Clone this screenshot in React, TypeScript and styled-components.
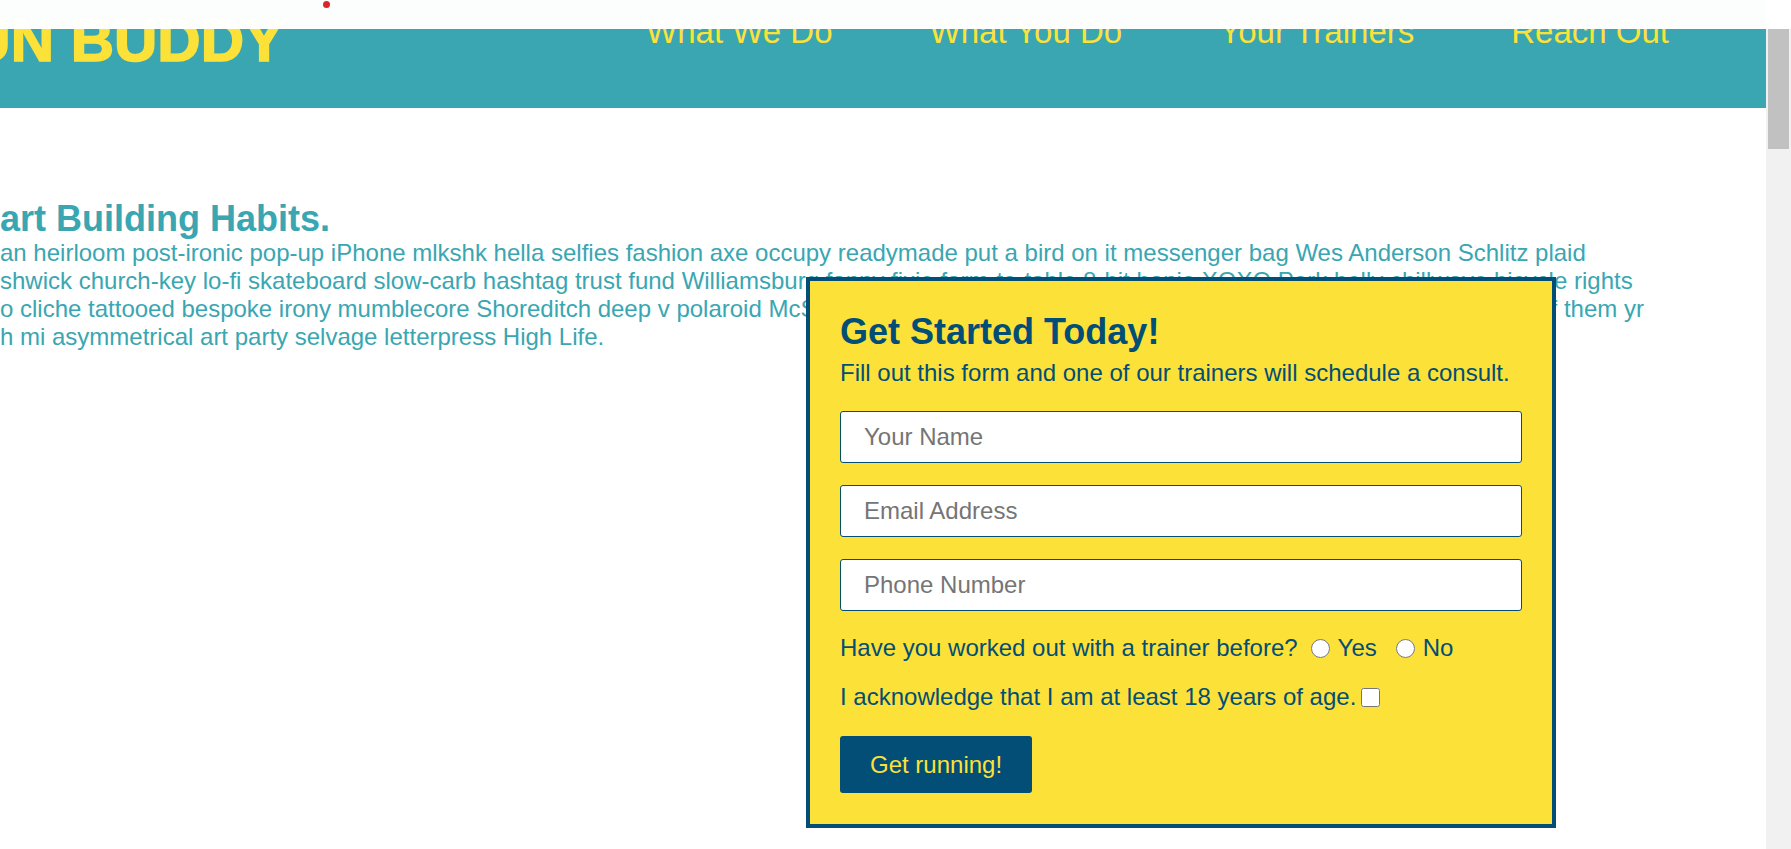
import React from "react";
import styled, { createGlobalStyle } from "styled-components";

const TEAL = "#39a6b2";
const YELLOW = "#fce138";
const NAVY = "#024e76";

const GlobalStyle = createGlobalStyle`
  * { box-sizing: border-box; }
  html, body {
    margin: 0;
    padding: 0;
    height: 100%;
    overflow: hidden;
    background: #fff;
  }
  body {
    font-family: "Liberation Sans", Arial, sans-serif;
  }
`;

const NAV_LINKS = ["What We Do", "What You Do", "Your Trainers", "Reach Out"];

const Page = () => {
  return (
    <>
      <GlobalStyle />
      <TopStrip>
        <Dot />
      </TopStrip>
      <Window>
        <Main>
          <Header>
            <Logo>Run Buddy</Logo>
            <Nav>
              {NAV_LINKS.map((item) => (
                <li key={item}>
                  <NavLink href="#">{item}</NavLink>
                </li>
              ))}
            </Nav>
          </Header>

          <Hero>
            <Intro>
              <IntroTitle>art Building Habits.</IntroTitle>
              <IntroText>
                an heirloom post-ironic pop-up iPhone mlkshk hella selfies fashion axe occupy readymade put a bird on it messenger bag Wes Anderson Schlitz plaid
                <br />
                shwick church-key lo-fi skateboard slow-carb hashtag trust fund Williamsburg fanny fixie farm-to-table 8-bit banjo XOXO Pork belly chillwave bicycle rights
                <br />
                o cliche tattooed bespoke irony mumblecore Shoreditch deep v polaroid McSweeney's craft beer vinyl semiotics 90's you probably haven't heard of them yr
                <br />
                h mi asymmetrical art party selvage letterpress High Life.
              </IntroText>
            </Intro>

            <Form onSubmit={(e) => e.preventDefault()}>
              <FormTitle>Get Started Today!</FormTitle>
              <FormLead>
                Fill out this form and one of our trainers will schedule a consult.
              </FormLead>
              <Fields>
                <Field type="text" placeholder="Your Name" />
                <Field type="email" placeholder="Email Address" />
                <Field type="tel" placeholder="Phone Number" />
              </Fields>
              <Question>
                Have you worked out with a trainer before?
                <Choice $offset={13}>
                  <Radio type="radio" name="trainer" />
                  Yes
                </Choice>
                <Choice $offset={19}>
                  <Radio type="radio" name="trainer" />
                  No
                </Choice>
              </Question>
              <Agree>
                I acknowledge that I am at least 18 years of age.
                <Check type="checkbox" />
              </Agree>
              <Submit type="submit">Get running!</Submit>
            </Form>
          </Hero>
        </Main>
        <Rail>
          <Thumb />
        </Rail>
      </Window>
    </>
  );
};

const TopStrip = styled.div`
  position: fixed;
  top: 0;
  left: 0;
  right: 0;
  height: 29px;
  background: rgba(255, 255, 255, 0.99);
  padding: 1px 0 0 323px;
  z-index: 10;
`;

const Dot = styled.span`
  display: block;
  width: 7px;
  height: 7px;
  border-radius: 50%;
  background: #dc2626;
`;

const Window = styled.div`
  display: flex;
  height: 100vh;
  overflow: hidden;
`;

const Main = styled.main`
  flex: 1;
  min-width: 0;
  overflow: hidden;
`;

const Header = styled.header`
  height: 108px;
  background: ${TEAL};
  display: flex;
  justify-content: space-between;
  align-items: flex-start;
  padding-top: 11px;
`;

const Logo = styled.h1`
  margin: 0 0 0 -76px;
  font-size: 60px;
  line-height: 60px;
  font-weight: 700;
  text-transform: uppercase;
  color: ${YELLOW};
  -webkit-text-stroke: 1.6px ${YELLOW};
  white-space: nowrap;
`;

const Nav = styled.ul`
  display: flex;
  gap: 97px;
  margin: 4px 97px 0 0;
  padding: 0;
  list-style: none;
`;

const NavLink = styled.a`
  color: ${YELLOW};
  font-size: 33px;
  line-height: 33px;
  text-decoration: none;
  white-space: nowrap;
`;

const Hero = styled.section`
  display: grid;
  padding-top: 93px;
`;

const Intro = styled.div`
  grid-area: 1 / 1;
  color: ${TEAL};
`;

const IntroTitle = styled.h2`
  margin: 0;
  font-size: 36px;
  line-height: 36px;
  font-weight: 700;
`;

const IntroText = styled.p`
  margin: 2px 0 0;
  font-size: 24px;
  line-height: 28px;
  white-space: nowrap;
`;

const Form = styled.form`
  grid-area: 1 / 1;
  justify-self: start;
  align-self: start;
  margin: 76px 0 0 806px;
  width: 750px;
  background: ${YELLOW};
  border: 4px solid ${NAVY};
  padding: 30px 30px 31px;
  display: flex;
  flex-direction: column;
  color: ${NAVY};
`;

const FormTitle = styled.h3`
  margin: 0;
  font-size: 36px;
  line-height: 41px;
  font-weight: 700;
`;

const FormLead = styled.p`
  margin: 7px 0 0;
  font-size: 24px;
  line-height: 28px;
`;

const Fields = styled.div`
  display: flex;
  flex-direction: column;
  gap: 22px;
  margin-top: 24px;
`;

const Field = styled.input`
  height: 52px;
  width: 100%;
  border: 1px solid ${NAVY};
  border-radius: 3px;
  padding: 0 23px;
  font-family: inherit;
  font-size: 24px;
  color: ${NAVY};
  background: #fff;

  &::placeholder {
    color: #757575;
  }
`;

const Question = styled.div`
  display: flex;
  align-items: center;
  margin-top: 23px;
  font-size: 24px;
  line-height: 28px;
`;

const Choice = styled.label<{ $offset: number }>`
  display: inline-flex;
  align-items: center;
  gap: 8px;
  margin-left: ${({ $offset }) => $offset}px;
`;

const Radio = styled.input`
  width: 19px;
  height: 19px;
  margin: 0;
`;

const Agree = styled.label`
  display: flex;
  align-items: center;
  margin-top: 21px;
  font-size: 24px;
  line-height: 28px;
`;

const Check = styled.input`
  width: 19px;
  height: 19px;
  margin: 0 0 0 5px;
`;

const Submit = styled.button`
  align-self: flex-start;
  margin-top: 25px;
  padding: 15px 30px;
  font-family: inherit;
  font-size: 24px;
  line-height: 27px;
  background: ${NAVY};
  color: ${YELLOW};
  border: none;
  border-radius: 3px;
  cursor: pointer;
`;

const Rail = styled.div`
  width: 25px;
  flex-shrink: 0;
  background: #f1f1f1;
  padding: 0 2px;
`;

const Thumb = styled.div`
  height: 149px;
  background: #c1c1c1;
`;

export default Page;
